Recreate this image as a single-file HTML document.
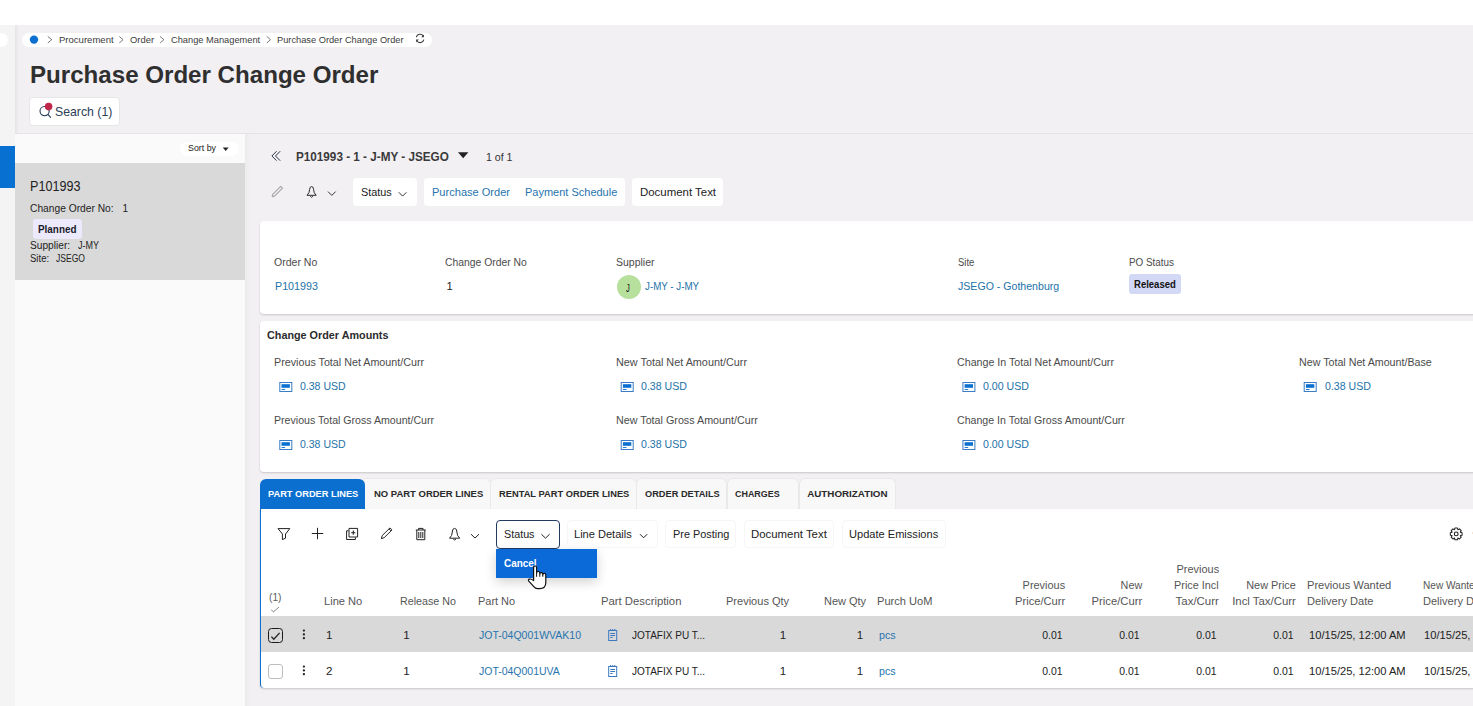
<!DOCTYPE html>
<html><head><meta charset="utf-8"><title>Purchase Order Change Order</title>
<style>
html,body{margin:0;padding:0;}
body{width:1473px;height:706px;overflow:hidden;position:relative;background:#f2f0f3;font-family:"Liberation Sans",sans-serif;}
.b{position:absolute;box-sizing:border-box;}
.t{position:absolute;white-space:pre;line-height:1;display:block;}
svg{position:absolute;overflow:visible;}
</style></head><body>
<!-- top white strip -->
<div class="b" style="left:0;top:0;width:1473px;height:25px;background:#ffffff"></div>
<!-- left sidebar -->
<div class="b" style="left:0;top:25px;width:15px;height:681px;background:#f4f4f5"></div>
<div class="b" style="left:15px;top:25px;width:4px;height:681px;background:linear-gradient(to right,rgba(0,0,0,0.05),rgba(0,0,0,0))"></div>
<div class="b" style="left:-6px;top:33px;width:14px;height:14px;border-radius:7px;background:#ffffff"></div>
<div class="b" style="left:0;top:146px;width:15px;height:42px;background:#0870d0"></div>
<!-- breadcrumb pill -->
<div class="b" style="left:22px;top:33px;width:410px;height:14px;border-radius:7px;background:#ffffff"></div>

<!-- search button -->
<div class="b" style="left:29px;top:96.5px;width:91px;height:29.5px;border-radius:4px;background:#fff;border:1px solid #e6e6e9"></div>
<!-- horizontal line -->
<div class="b" style="left:15px;top:133px;width:1458px;height:1px;background:#e4e4e6"></div>
<!-- list panel -->
<div class="b" style="left:15px;top:134px;width:230px;height:572px;background:#fafafa"></div>
<div class="b" style="left:245px;top:134px;width:5px;height:572px;background:linear-gradient(to right,rgba(0,0,0,0.025),rgba(0,0,0,0))"></div>
<div class="b" style="left:180px;top:142px;width:59px;height:14px;border-radius:7px;background:#ffffff"></div>
<div class="b" style="left:15px;top:163px;width:230px;height:117px;background:#d9d9d9"></div>
<div class="b" style="left:33px;top:219px;width:49px;height:20px;border-radius:3px;background:#ebe9fb"></div>
<!-- status/group/doc buttons -->
<div class="b" style="left:353px;top:178px;width:64px;height:28px;border-radius:4px;background:#fff"></div>
<div class="b" style="left:424px;top:178px;width:201px;height:28px;border-radius:4px;background:#fff"></div>
<div class="b" style="left:632px;top:178px;width:91px;height:28px;border-radius:4px;background:#fff"></div>
<!-- info card -->
<div class="b" style="left:260px;top:221px;width:1230px;height:93px;border-radius:4px;background:#fff;box-shadow:0 1px 2px rgba(0,0,0,0.18)"></div>
<div class="b" style="left:617px;top:275px;width:24px;height:24px;border-radius:50%;background:#b7e09c"></div>
<div class="b" style="left:1129px;top:274px;width:52px;height:19.5px;border-radius:3px;background:#d3d8f5"></div>
<!-- amounts card -->
<div class="b" style="left:260px;top:321px;width:1230px;height:151px;border-radius:4px;background:#fff;box-shadow:0 1px 2px rgba(0,0,0,0.18)"></div>
<!-- tabs -->
<div class="b" style="left:365px;top:478px;width:125.5px;height:31px;border-radius:0 6px 0 0;background:#f8f8f8;border:1px solid #e9e9ea;border-bottom:none;border-left:none"></div>
<div class="b" style="left:490px;top:478px;width:146.5px;height:31px;border-radius:6px 6px 0 0;background:#f8f8f8;border:1px solid #e9e9ea;border-bottom:none"></div>
<div class="b" style="left:636px;top:478px;width:91px;height:31px;border-radius:6px 6px 0 0;background:#f8f8f8;border:1px solid #e9e9ea;border-bottom:none"></div>
<div class="b" style="left:727px;top:478px;width:72px;height:31px;border-radius:6px 6px 0 0;background:#f8f8f8;border:1px solid #e9e9ea;border-bottom:none"></div>
<div class="b" style="left:799px;top:478px;width:97px;height:31px;border-radius:6px 6px 0 0;background:#f8f8f8;border:1px solid #e9e9ea;border-bottom:none"></div>
<div class="b" style="left:260px;top:479px;width:105px;height:30px;border-radius:6px 6px 0 0;background:#0a6fcf"></div>
<!-- table card -->
<div class="b" style="left:260px;top:509px;width:1230px;height:179px;border-radius:0 0 4px 4px;background:#fff;border-left:1px solid #0a6fcf;box-shadow:0 1px 2px rgba(0,0,0,0.18)"></div>
<div class="b" style="left:261px;top:616px;width:1212px;height:36px;background:#d9d9d9"></div>
<!-- status outlined button -->
<div class="b" style="left:496px;top:520px;width:64px;height:28.5px;border-radius:4px;background:#fff;border:1px solid #1f3b5e"></div>
<!-- dropdown -->
<div class="b" style="left:496px;top:549px;width:101px;height:29px;background:#0b69d8;box-shadow:0 4px 12px rgba(0,0,0,0.18)"></div>
<!-- checkboxes -->
<div class="b" style="left:268px;top:628px;width:14.5px;height:14.5px;border-radius:3.5px;border:1.7px solid #1a1a1a;background:transparent"></div>
<div class="b" style="left:268px;top:664px;width:14.5px;height:14.5px;border-radius:3px;border:1px solid #bdbdbd;background:#fff"></div>
<!-- faint toolbar button outlines -->
<div class="b" style="left:567px;top:520px;width:90.5px;height:28px;border-radius:4px;border:1px solid #f6f6f6"></div>
<div class="b" style="left:665px;top:520px;width:70.5px;height:28px;border-radius:4px;border:1px solid #f6f6f6"></div>
<div class="b" style="left:743.5px;top:520px;width:90.5px;height:28px;border-radius:4px;border:1px solid #f6f6f6"></div>
<div class="b" style="left:842px;top:520px;width:103.5px;height:28px;border-radius:4px;border:1px solid #f6f6f6"></div>
<svg style="left:0;top:0" width="1473" height="706" viewBox="0 0 1473 706">
<g fill="none" stroke="#6a6a6a" stroke-width="0.9" stroke-linecap="round" stroke-linejoin="round">
<path d="M48.1,36.7 L51.7,39.7 L48.1,42.7"/>
<path d="M119.6,36.7 L123.1,39.7 L119.6,42.7"/>
<path d="M160.4,36.7 L163.9,39.7 L160.4,42.7"/>
<path d="M267.1,36.7 L270.5,39.7 L267.1,42.7"/>
</g>
<circle cx="34" cy="39.6" r="4.2" fill="#0a6fd0"/>
<!-- refresh -->
<g fill="none" stroke="#333" stroke-width="1.1">
<path d="M416.3,37.2 A3.9,3.9 0 0 1 423.2,35.8"/>
<path d="M423.8,39.6 A3.9,3.9 0 0 1 416.9,41.0"/>
</g>
<path d="M421.2,37.2 L423.9,37.2 L423.9,34.5 Z" fill="#333"/>
<path d="M418.8,39.6 L416.1,39.6 L416.1,42.3 Z" fill="#333"/>
<!-- search magnifier -->
<circle cx="44.6" cy="111.1" r="4.6" fill="none" stroke="#233a55" stroke-width="1.1"/>
<path d="M47.9,114.4 L50.8,117.6" stroke="#233a55" stroke-width="1.1" fill="none"/>
<circle cx="48.6" cy="106.6" r="3.8" fill="#c0284b"/>
<!-- sort caret -->
<path d="M222.8,147.6 L228.6,147.6 L225.7,151 Z" fill="#222"/>
<!-- header double chevron -->
<g fill="none" stroke="#2a3548" stroke-width="1.0">
<path d="M276.6,151.2 L271.9,156 L276.6,160.7"/>
<path d="M280.2,151.2 L275.5,156 L280.2,160.7"/>
</g>
<!-- header caret -->
<path d="M458,152.2 L468.4,152.2 L463.2,158.2 Z" fill="#222"/>
<!-- disabled pencil -->
<g fill="none" stroke="#a6a6a6" stroke-width="1.1" stroke-linejoin="round">
<path d="M272.2,196.7 L272.7,194.3 L280.7,186.3 L282.5,188.1 L274.5,196.1 Z"/>
</g>
<!-- header bell -->
<g fill="none" stroke="#2a2a2a" stroke-width="1" stroke-linejoin="round">
<path d="M307,195.3 Q309.6,193 309.6,189.6 Q309.6,186.6 311.6,186.6 Q313.6,186.6 313.6,189.6 Q313.6,193 316.2,195.3 Z"/>
<path d="M310.3,196.3 Q311.6,198.2 312.9,196.3"/>
</g>
<path d="M328,191.6 L331.8,195.4 L335.6,191.6" fill="none" stroke="#333" stroke-width="1"/>
<!-- header status chevron -->
<path d="M398.8,192.3 L402.6,196.1 L406.4,192.3" fill="none" stroke="#333" stroke-width="1"/>
<!-- monitor icons -->
<g id="mon">
</g>
<rect x="279.8" y="382.5" width="12" height="9" fill="none" stroke="#3b7cc4" stroke-width="1"/><rect x="281.5" y="384.2" width="8.4" height="3.6" fill="#0b6fd0"/><rect x="281.5" y="389" width="3.6" height="0.9" fill="#0b6fd0"/><rect x="279.8" y="440.5" width="12" height="9" fill="none" stroke="#3b7cc4" stroke-width="1"/><rect x="281.5" y="442.2" width="8.4" height="3.6" fill="#0b6fd0"/><rect x="281.5" y="447" width="3.6" height="0.9" fill="#0b6fd0"/><rect x="621.2" y="382.5" width="12" height="9" fill="none" stroke="#3b7cc4" stroke-width="1"/><rect x="622.9000000000001" y="384.2" width="8.4" height="3.6" fill="#0b6fd0"/><rect x="622.9000000000001" y="389" width="3.6" height="0.9" fill="#0b6fd0"/><rect x="621.2" y="440.5" width="12" height="9" fill="none" stroke="#3b7cc4" stroke-width="1"/><rect x="622.9000000000001" y="442.2" width="8.4" height="3.6" fill="#0b6fd0"/><rect x="622.9000000000001" y="447" width="3.6" height="0.9" fill="#0b6fd0"/><rect x="962.9" y="382.5" width="12" height="9" fill="none" stroke="#3b7cc4" stroke-width="1"/><rect x="964.6" y="384.2" width="8.4" height="3.6" fill="#0b6fd0"/><rect x="964.6" y="389" width="3.6" height="0.9" fill="#0b6fd0"/><rect x="962.9" y="440.5" width="12" height="9" fill="none" stroke="#3b7cc4" stroke-width="1"/><rect x="964.6" y="442.2" width="8.4" height="3.6" fill="#0b6fd0"/><rect x="964.6" y="447" width="3.6" height="0.9" fill="#0b6fd0"/><rect x="1304.2" y="382.5" width="12" height="9" fill="none" stroke="#3b7cc4" stroke-width="1"/><rect x="1305.9" y="384.2" width="8.4" height="3.6" fill="#0b6fd0"/><rect x="1305.9" y="389" width="3.6" height="0.9" fill="#0b6fd0"/>
<!-- table toolbar -->
<g fill="none" stroke="#222" stroke-width="1" stroke-linejoin="round">
<path d="M278,528.6 L289.8,528.6 L285.5,534 L285.5,538.2 L282.4,539.6 L282.4,534 Z"/>
<path d="M317.5,527.8 L317.5,539.2 M311.8,533.5 L323.2,533.5"/>
<path d="M348.6,530.8 L346.6,530.8 L346.6,539.5 L355.4,539.5 L355.4,537.4"/>
<rect x="349" y="528.4" width="8.6" height="8.6"/>
<path d="M353.3,530.6 L353.3,534.8 M351.2,532.7 L355.4,532.7" stroke-width="1.1"/>
<path d="M381.4,538.6 L382.2,535.6 L390,527.9 L392,529.9 L384.2,537.7 Z"/>
<path d="M389,528.9 L391,530.9" />
<path d="M415.8,530 L425.8,530 M418.6,530 L418.6,528.4 L423,528.4 L423,530 M416.8,530 L416.8,539.7 L424.8,539.7 L424.8,530 M418.8,532 L418.8,538 M420.8,532 L420.8,538 M422.8,532 L422.8,538"/>
<path d="M449.5,538.2 Q452.3,535.8 452.3,532 Q452.3,528.4 454.6,528.4 Q456.9,528.4 456.9,532 Q456.9,535.8 459.7,538.2 Z"/>
<path d="M453.2,539 Q454.6,540.8 456,539"/>
<path d="M471,534.2 L475,538 L479,534.2"/>
<path d="M541.4,534.2 L545.5,538.2 L549.6,534.2"/>
<path d="M640,534.2 L643.6,537.8 L647.2,534.2"/>
</g>
<!-- gear -->
<g transform="translate(1456.2,533.9)">
<path fill="none" stroke="#222" stroke-width="1.05" stroke-linejoin="round" d="M-1.69,-4.17 L-1.25,-5.87 L1.25,-5.87 L1.69,-4.17 L1.76,-4.14 L3.27,-5.03 L5.03,-3.27 L4.14,-1.76 L4.17,-1.69 L5.87,-1.25 L5.87,1.25 L4.17,1.69 L4.14,1.76 L5.03,3.27 L3.27,5.03 L1.76,4.14 L1.69,4.17 L1.25,5.87 L-1.25,5.87 L-1.69,4.17 L-1.76,4.14 L-3.27,5.03 L-5.03,3.27 L-4.14,1.76 L-4.17,1.69 L-5.87,1.25 L-5.87,-1.25 L-4.17,-1.69 L-4.14,-1.76 L-5.03,-3.27 L-3.27,-5.03 L-1.76,-4.14 Z"/>
<circle r="1.9" fill="none" stroke="#222" stroke-width="1.1"/>
</g>
<rect x="1472" y="532.5" width="1" height="1" fill="#ecc9a8"/>
<!-- header check -->
<path d="M271.2,609.9 L273.5,611.8 L279,607.1" fill="none" stroke="#777" stroke-width="0.9"/>
<!-- checkbox check -->
<path d="M271.4,636.6 L273.8,639.3 L279.6,632.9" fill="none" stroke="#222" stroke-width="1.3"/>
<!-- kebabs -->
<g fill="#222">
<circle cx="303.9" cy="630.6" r="1.15"/><circle cx="303.9" cy="634.4" r="1.15"/><circle cx="303.9" cy="638.2" r="1.15"/>
<circle cx="303.9" cy="666.6" r="1.15"/><circle cx="303.9" cy="670.4" r="1.15"/><circle cx="303.9" cy="674.2" r="1.15"/>
</g>
<g fill="none" stroke="#3a78c0" stroke-width="1">
<rect x="608.7" y="630.5" width="8" height="10"/>
<path d="M610.3,633.5 L615.1,633.5 M610.3,635.5 L615.1,635.5 M610.3,637.5 L612.6,637.5"/>
<path d="M610.6,629 L610.6,631 M612.7,629 L612.7,631 M614.8,629 L614.8,631"/>
</g><g fill="none" stroke="#3a78c0" stroke-width="1">
<rect x="608.7" y="666.5" width="8" height="10"/>
<path d="M610.3,669.5 L615.1,669.5 M610.3,671.5 L615.1,671.5 M610.3,673.5 L612.6,673.5"/>
<path d="M610.6,665 L610.6,667 M612.7,665 L612.7,667 M614.8,665 L614.8,667"/>
</g></svg>

<span class="t" style="left:58.60px;top:35.00px;font-size:9.6px;color:#3c3c3c;transform:scaleX(0.994);transform-origin:left;">Procurement</span>
<span class="t" style="left:129.70px;top:35.00px;font-size:9.6px;color:#3c3c3c;transform:scaleX(0.982);transform-origin:left;">Order</span>
<span class="t" style="left:170.70px;top:35.00px;font-size:9.6px;color:#3c3c3c;transform:scaleX(0.966);transform-origin:left;">Change Management</span>
<span class="t" style="left:276.70px;top:35.00px;font-size:9.6px;color:#3c3c3c;transform:scaleX(0.965);transform-origin:left;">Purchase Order Change Order</span>
<span class="t" style="left:30.00px;top:64.00px;font-size:23.5px;font-weight:700;color:#2f2f2f;transform:scaleX(1.026);transform-origin:left;">Purchase Order Change Order</span>
<span class="t" style="left:54.90px;top:105.00px;font-size:13.6px;color:#2b3d57;transform:scaleX(0.903);transform-origin:left;">Search (1)</span>
<span class="t" style="left:188.00px;top:143.00px;font-size:9.4px;color:#222;transform:scaleX(0.943);transform-origin:left;">Sort by</span>
<span class="t" style="left:30.00px;top:179.00px;font-size:14px;color:#222;transform:scaleX(0.901);transform-origin:left;">P101993</span>
<span class="t" style="left:29.90px;top:204.00px;font-size:10px;color:#222;transform:scaleX(1.023);transform-origin:left;">Change Order No:</span>
<span class="t" style="left:122.50px;top:204.00px;font-size:10px;color:#222;">1</span>
<span class="t" style="left:38.40px;top:225.00px;font-size:10px;font-weight:700;color:#1a1a2a;transform:scaleX(0.990);transform-origin:left;">Planned</span>
<span class="t" style="left:29.90px;top:241.00px;font-size:10px;color:#222;transform:scaleX(1.016);transform-origin:left;">Supplier:</span>
<span class="t" style="left:77.50px;top:241.00px;font-size:10px;color:#222;transform:scaleX(0.900);transform-origin:left;">J-MY</span>
<span class="t" style="left:29.90px;top:254.00px;font-size:10px;color:#222;transform:scaleX(0.954);transform-origin:left;">Site:</span>
<span class="t" style="left:56.00px;top:254.00px;font-size:10px;color:#222;transform:scaleX(0.855);transform-origin:left;">JSEGO</span>
<span class="t" style="left:296.00px;top:151.00px;font-size:12.6px;font-weight:700;color:#3a3a3a;transform:scaleX(0.930);transform-origin:left;">P101993 - 1 - J-MY - JSEGO</span>
<span class="t" style="left:485.50px;top:152.00px;font-size:11px;color:#333;transform:scaleX(0.963);transform-origin:left;">1 of 1</span>
<span class="t" style="left:360.60px;top:187.00px;font-size:11.8px;color:#222;transform:scaleX(0.921);transform-origin:left;">Status</span>
<span class="t" style="left:432.00px;top:187.00px;font-size:11.8px;color:#2774ae;transform:scaleX(0.937);transform-origin:left;">Purchase Order</span>
<span class="t" style="left:525.40px;top:187.00px;font-size:11.8px;color:#2774ae;transform:scaleX(0.932);transform-origin:left;">Payment Schedule</span>
<span class="t" style="left:639.90px;top:187.00px;font-size:11.8px;color:#222;transform:scaleX(0.969);transform-origin:left;">Document Text</span>
<span class="t" style="left:274.40px;top:258.00px;font-size:10px;color:#4b4b4b;transform:scaleX(1.053);transform-origin:left;">Order No</span>
<span class="t" style="left:275.40px;top:281.00px;font-size:11.2px;color:#2372a8;transform:scaleX(0.958);transform-origin:left;">P101993</span>
<span class="t" style="left:444.80px;top:258.00px;font-size:10px;color:#4b4b4b;transform:scaleX(1.036);transform-origin:left;">Change Order No</span>
<span class="t" style="left:446.50px;top:281.00px;font-size:11.2px;color:#222;">1</span>
<span class="t" style="left:615.80px;top:258.00px;font-size:10px;color:#4b4b4b;transform:scaleX(1.049);transform-origin:left;">Supplier</span>
<span class="t" style="left:645.00px;top:281.00px;font-size:11.2px;color:#2372a8;transform:scaleX(0.872);transform-origin:left;">J-MY - J-MY</span>
<span class="t" style="left:626.40px;top:283.00px;font-size:11.4px;color:#111;transform:scaleX(0.666);transform-origin:left;">J</span>
<span class="t" style="left:957.70px;top:258.00px;font-size:10px;color:#4b4b4b;transform:scaleX(0.946);transform-origin:left;">Site</span>
<span class="t" style="left:958.20px;top:281.00px;font-size:11.2px;color:#2372a8;transform:scaleX(0.946);transform-origin:left;">JSEGO - Gothenburg</span>
<span class="t" style="left:1128.60px;top:258.00px;font-size:10px;color:#4b4b4b;transform:scaleX(0.987);transform-origin:left;">PO Status</span>
<span class="t" style="left:1134.40px;top:280.00px;font-size:10px;font-weight:700;color:#111;transform:scaleX(0.952);transform-origin:left;">Released</span>
<span class="t" style="left:267.30px;top:330.00px;font-size:11px;font-weight:700;color:#2c2c2c;transform:scaleX(0.982);transform-origin:left;">Change Order Amounts</span>
<span class="t" style="left:274.40px;top:358.00px;font-size:10px;color:#4b4b4b;transform:scaleX(1.073);transform-origin:left;">Previous Total Net Amount/Curr</span>
<span class="t" style="left:299.60px;top:381.00px;font-size:11.2px;color:#2372a8;transform:scaleX(0.940);transform-origin:left;">0.38 USD</span>
<span class="t" style="left:274.40px;top:416.00px;font-size:10px;color:#4b4b4b;transform:scaleX(1.060);transform-origin:left;">Previous Total Gross Amount/Curr</span>
<span class="t" style="left:299.60px;top:439.00px;font-size:11.2px;color:#2372a8;transform:scaleX(0.940);transform-origin:left;">0.38 USD</span>
<span class="t" style="left:615.60px;top:358.00px;font-size:10px;color:#4b4b4b;transform:scaleX(1.083);transform-origin:left;">New Total Net Amount/Curr</span>
<span class="t" style="left:641.00px;top:381.00px;font-size:11.2px;color:#2372a8;transform:scaleX(0.946);transform-origin:left;">0.38 USD</span>
<span class="t" style="left:615.60px;top:416.00px;font-size:10px;color:#4b4b4b;transform:scaleX(1.074);transform-origin:left;">New Total Gross Amount/Curr</span>
<span class="t" style="left:641.00px;top:439.00px;font-size:11.2px;color:#2372a8;transform:scaleX(0.946);transform-origin:left;">0.38 USD</span>
<span class="t" style="left:957.40px;top:358.00px;font-size:10px;color:#4b4b4b;transform:scaleX(1.067);transform-origin:left;">Change In Total Net Amount/Curr</span>
<span class="t" style="left:982.70px;top:381.00px;font-size:11.2px;color:#2372a8;transform:scaleX(0.948);transform-origin:left;">0.00 USD</span>
<span class="t" style="left:957.40px;top:416.00px;font-size:10px;color:#4b4b4b;transform:scaleX(1.061);transform-origin:left;">Change In Total Gross Amount/Curr</span>
<span class="t" style="left:982.70px;top:439.00px;font-size:11.2px;color:#2372a8;transform:scaleX(0.948);transform-origin:left;">0.00 USD</span>
<span class="t" style="left:1299.30px;top:358.00px;font-size:10px;color:#4b4b4b;transform:scaleX(1.068);transform-origin:left;">New Total Net Amount/Base</span>
<span class="t" style="left:1324.60px;top:381.00px;font-size:11.2px;color:#2372a8;transform:scaleX(0.948);transform-origin:left;">0.38 USD</span>
<span class="t" style="left:267.70px;top:489.00px;font-size:9.8px;font-weight:700;color:#ffffff;transform:scaleX(0.944);transform-origin:left;">PART ORDER LINES</span>
<span class="t" style="left:373.60px;top:489.00px;font-size:9.8px;font-weight:700;color:#2a2a2a;transform:scaleX(0.966);transform-origin:left;">NO PART ORDER LINES</span>
<span class="t" style="left:498.70px;top:489.00px;font-size:9.8px;font-weight:700;color:#2a2a2a;transform:scaleX(0.950);transform-origin:left;">RENTAL PART ORDER LINES</span>
<span class="t" style="left:644.70px;top:489.00px;font-size:9.8px;font-weight:700;color:#2a2a2a;transform:scaleX(0.942);transform-origin:left;">ORDER DETAILS</span>
<span class="t" style="left:735.40px;top:489.00px;font-size:9.8px;font-weight:700;color:#2a2a2a;transform:scaleX(0.910);transform-origin:left;">CHARGES</span>
<span class="t" style="left:807.20px;top:489.00px;font-size:9.8px;font-weight:700;color:#2a2a2a;">AUTHORIZATION</span>
<span class="t" style="left:503.70px;top:529.00px;font-size:11.8px;color:#222;transform:scaleX(0.912);transform-origin:left;">Status</span>
<span class="t" style="left:574.30px;top:529.00px;font-size:11.8px;color:#222;transform:scaleX(0.936);transform-origin:left;">Line Details</span>
<span class="t" style="left:672.60px;top:529.00px;font-size:11.8px;color:#222;transform:scaleX(0.922);transform-origin:left;">Pre Posting</span>
<span class="t" style="left:751.20px;top:529.00px;font-size:11.8px;color:#222;transform:scaleX(0.966);transform-origin:left;">Document Text</span>
<span class="t" style="left:849.40px;top:529.00px;font-size:11.8px;color:#222;transform:scaleX(0.938);transform-origin:left;">Update Emissions</span>
<span class="t" style="left:503.70px;top:558.00px;font-size:11.8px;font-weight:700;color:#ffffff;transform:scaleX(0.843);transform-origin:left;">Cancel</span>
<span class="t" style="left:268.90px;top:592.00px;font-size:10.8px;color:#606060;transform:scaleX(0.947);transform-origin:left;">(1)</span>
<span class="t" style="left:323.80px;top:595.00px;font-size:11.6px;color:#555555;transform:scaleX(0.958);transform-origin:left;">Line No</span>
<span class="t" style="left:400.40px;top:595.00px;font-size:11.6px;color:#555555;transform:scaleX(0.923);transform-origin:left;">Release No</span>
<span class="t" style="left:477.90px;top:595.00px;font-size:11.6px;color:#555555;transform:scaleX(0.944);transform-origin:left;">Part No</span>
<span class="t" style="left:600.60px;top:595.00px;font-size:11.6px;color:#555555;transform:scaleX(0.975);transform-origin:left;">Part Description</span>
<span class="t" style="left:725.50px;top:595.00px;font-size:11.6px;color:#555555;transform:scaleX(0.951);transform-origin:left;">Previous Qty</span>
<span class="t" style="left:823.60px;top:595.00px;font-size:11.6px;color:#555555;transform:scaleX(0.947);transform-origin:left;">New Qty</span>
<span class="t" style="left:877.10px;top:595.00px;font-size:11.6px;color:#555555;transform:scaleX(0.957);transform-origin:left;">Purch UoM</span>
<span class="t" style="right:408.00px;top:579.00px;font-size:11.6px;color:#555555;transform:scaleX(0.942);transform-origin:right;">Previous</span>
<span class="t" style="right:408.00px;top:595.00px;font-size:11.6px;color:#555555;transform:scaleX(0.960);transform-origin:right;">Price/Curr</span>
<span class="t" style="right:331.00px;top:579.00px;font-size:11.6px;color:#555555;transform:scaleX(0.931);transform-origin:right;">New</span>
<span class="t" style="right:331.00px;top:595.00px;font-size:11.6px;color:#555555;transform:scaleX(0.970);transform-origin:right;">Price/Curr</span>
<span class="t" style="right:253.90px;top:563.00px;font-size:11.6px;color:#555555;transform:scaleX(0.944);transform-origin:right;">Previous</span>
<span class="t" style="right:253.90px;top:579.00px;font-size:11.6px;color:#555555;transform:scaleX(0.935);transform-origin:right;">Price Incl</span>
<span class="t" style="right:253.90px;top:595.00px;font-size:11.6px;color:#555555;transform:scaleX(0.986);transform-origin:right;">Tax/Curr</span>
<span class="t" style="right:177.40px;top:579.00px;font-size:11.6px;color:#555555;transform:scaleX(0.939);transform-origin:right;">New Price</span>
<span class="t" style="right:177.40px;top:595.00px;font-size:11.6px;color:#555555;transform:scaleX(0.982);transform-origin:right;">Incl Tax/Curr</span>
<span class="t" style="left:1307.20px;top:579.00px;font-size:11.6px;color:#555555;transform:scaleX(0.959);transform-origin:left;">Previous Wanted</span>
<span class="t" style="left:1307.20px;top:595.00px;font-size:11.6px;color:#555555;transform:scaleX(0.954);transform-origin:left;">Delivery Date</span>
<span class="t" style="left:1422.70px;top:579.00px;font-size:11.6px;color:#555555;transform:scaleX(0.869);transform-origin:left;">New Wanted</span>
<span class="t" style="left:1422.70px;top:595.00px;font-size:11.6px;color:#555555;transform:scaleX(0.953);transform-origin:left;">Delivery Date</span>
<span class="t" style="left:326.00px;top:629.00px;font-size:11.6px;color:#222;">1</span>
<span class="t" style="left:403.20px;top:629.00px;font-size:11.6px;color:#222;">1</span>
<span class="t" style="left:479.20px;top:629.00px;font-size:11.6px;color:#2774ae;transform:scaleX(0.906);transform-origin:left;">JOT-04Q001WVAK10</span>
<span class="t" style="left:632.00px;top:629.00px;font-size:11.6px;color:#222;transform:scaleX(0.864);transform-origin:left;">JOTAFIX PU T...</span>
<span class="t" style="right:686.90px;top:629.00px;font-size:11.6px;color:#222;">1</span>
<span class="t" style="right:609.80px;top:629.00px;font-size:11.6px;color:#222;">1</span>
<span class="t" style="left:878.50px;top:629.00px;font-size:11.6px;color:#2774ae;transform:scaleX(0.920);transform-origin:left;">pcs</span>
<span class="t" style="right:410.30px;top:629.00px;font-size:11.6px;color:#222;transform:scaleX(0.899);transform-origin:right;">0.01</span>
<span class="t" style="right:333.80px;top:629.00px;font-size:11.6px;color:#222;transform:scaleX(0.899);transform-origin:right;">0.01</span>
<span class="t" style="right:256.40px;top:629.00px;font-size:11.6px;color:#222;transform:scaleX(0.899);transform-origin:right;">0.01</span>
<span class="t" style="right:179.90px;top:629.00px;font-size:11.6px;color:#222;transform:scaleX(0.899);transform-origin:right;">0.01</span>
<span class="t" style="left:1308.70px;top:629.00px;font-size:11.6px;color:#222;transform:scaleX(0.961);transform-origin:left;">10/15/25, 12:00 AM</span>
<span class="t" style="left:1424.40px;top:629.00px;font-size:11.6px;color:#222;transform:scaleX(0.961);transform-origin:left;">10/15/25, 12:00 AM</span>
<span class="t" style="left:326.00px;top:665.00px;font-size:11.6px;color:#222;">2</span>
<span class="t" style="left:403.20px;top:665.00px;font-size:11.6px;color:#222;">1</span>
<span class="t" style="left:479.20px;top:665.00px;font-size:11.6px;color:#2774ae;transform:scaleX(0.904);transform-origin:left;">JOT-04Q001UVA</span>
<span class="t" style="left:632.00px;top:665.00px;font-size:11.6px;color:#222;transform:scaleX(0.864);transform-origin:left;">JOTAFIX PU T...</span>
<span class="t" style="right:686.90px;top:665.00px;font-size:11.6px;color:#222;">1</span>
<span class="t" style="right:609.80px;top:665.00px;font-size:11.6px;color:#222;">1</span>
<span class="t" style="left:878.50px;top:665.00px;font-size:11.6px;color:#2774ae;transform:scaleX(0.920);transform-origin:left;">pcs</span>
<span class="t" style="right:410.30px;top:665.00px;font-size:11.6px;color:#222;transform:scaleX(0.899);transform-origin:right;">0.01</span>
<span class="t" style="right:333.80px;top:665.00px;font-size:11.6px;color:#222;transform:scaleX(0.899);transform-origin:right;">0.01</span>
<span class="t" style="right:256.40px;top:665.00px;font-size:11.6px;color:#222;transform:scaleX(0.899);transform-origin:right;">0.01</span>
<span class="t" style="right:179.90px;top:665.00px;font-size:11.6px;color:#222;transform:scaleX(0.899);transform-origin:right;">0.01</span>
<span class="t" style="left:1308.70px;top:665.00px;font-size:11.6px;color:#222;transform:scaleX(0.961);transform-origin:left;">10/15/25, 12:00 AM</span>
<span class="t" style="left:1424.40px;top:665.00px;font-size:11.6px;color:#222;transform:scaleX(0.961);transform-origin:left;">10/15/25, 12:00 AM</span><svg style="left:0;top:0" width="1473" height="706" viewBox="0 0 1473 706">
<path d="M533.6,580.4 L533.6,567.5 A1.5,1.5 0 0 1 536.6,567.5 L536.6,573.1 A1.6,1.6 0 0 1 539.8,573.1 L539.8,574.1 A1.5,1.5 0 0 1 542.8,574.1 L542.8,574.8 A1.5,1.5 0 0 1 545.8,574.8 L545.8,582.5 Q545.8,588.6 539.5,588.6 L537.5,588.6 Q535.5,588.6 533.8,586.6 L528.8,581.2 Q527.8,579.8 529.4,579.1 Q531,578.6 533.6,580.6 Z" fill="#fff" stroke="#111" stroke-width="1.2" stroke-linejoin="round"/>
<path d="M536.6,573.1 L536.6,576.8 M539.8,574.1 L539.8,576.8 M542.8,574.8 L542.8,576.8" stroke="#111" stroke-width="1" fill="none"/>
</svg>

</body></html>
